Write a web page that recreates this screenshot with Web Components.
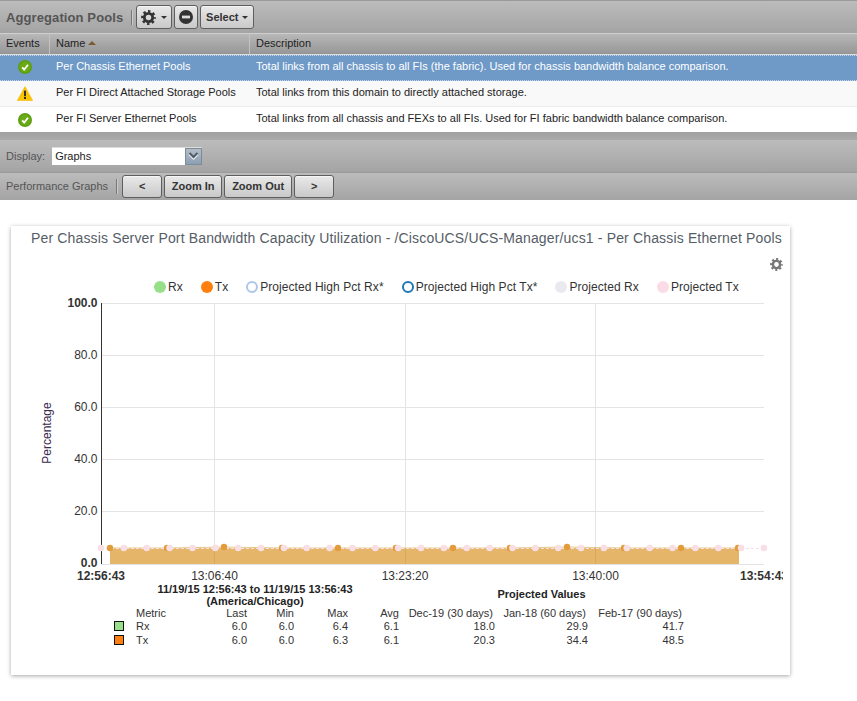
<!DOCTYPE html>
<html>
<head>
<meta charset="utf-8">
<title>Aggregation Pools</title>
<style>
  html, body { margin: 0; background: #fff; }
  body { font-family: "Liberation Sans", Arial, sans-serif; font-size: 11px; color: #222; overflow: hidden; height: 701px; }
</style>
</head>
<body>
<ucs-page>
  <ucs-bar slot="top" style="--h:33px;--pad:6px">
    <span style="font:bold 13px 'Liberation Sans',sans-serif;color:#555;letter-spacing:.1px">Aggregation Pools</span>
    <ucs-sep></ucs-sep>
    <ucs-button w="36" icon="gear-caret"></ucs-button>
    <ucs-button w="24" icon="minus"></ucs-button>
    <ucs-button w="54" bold caret>Select</ucs-button>
  </ucs-bar>
  <pool-table slot="top">
    <pool-row status="ok" selected name="Per Chassis Ethernet Pools" desc="Total links from all chassis to all FIs (the fabric). Used for chassis bandwidth balance comparison."></pool-row>
    <pool-row status="warn" alt name="Per FI Direct Attached Storage Pools" desc="Total links from this domain to directly attached storage."></pool-row>
    <pool-row status="ok" name="Per FI Server Ethernet Pools" desc="Total links from all chassis and FEXs to all FIs. Used for FI fabric bandwidth balance comparison."></pool-row>
  </pool-table>
  <display-bar slot="top"></display-bar>
  <ucs-bar slot="top" style="--h:28px;--pad:6px;padding-bottom:1px">
    <span style="color:#555">Performance Graphs</span>
    <ucs-sep style="margin-right:3px"></ucs-sep>
    <ucs-button w="40" bold h="23">&lt;</ucs-button>
    <ucs-button w="58" bold h="23">Zoom In</ucs-button>
    <ucs-button w="68" bold h="23">Zoom Out</ucs-button>
    <ucs-button w="40" bold h="23">&gt;</ucs-button>
  </ucs-bar>
  <chart-card title-text="Per Chassis Server Port Bandwidth Capacity Utilization - /CiscoUCS/UCS-Manager/ucs1 - Per Chassis Ethernet Pools">
    <chart-legend>
      <legend-item color="#98df8a">Rx</legend-item>
      <legend-item color="#ff7f0e">Tx</legend-item>
      <legend-item ring="#aec7e8">Projected High Pct Rx*</legend-item>
      <legend-item ring="#1f77b4">Projected High Pct Tx*</legend-item>
      <legend-item color="#e9e9ef">Projected Rx</legend-item>
      <legend-item color="#fbdce6">Projected Tx</legend-item>
    </chart-legend>
    <chart-plot></chart-plot>
    <stats-table></stats-table>
  </chart-card>
</ucs-page>

<script>
function gearSvg(size, color) {
  return `<svg width="${size}" height="${size}" viewBox="0 0 18 18" fill="none" stroke="${color}">
    <circle cx="9" cy="9" r="5" stroke-width="3.4"/>
    <circle cx="9" cy="9" r="7.4" stroke-width="3" stroke-dasharray="2.9 2.91" stroke-dashoffset="1.45"/>
  </svg>`;
}

class UcsPage extends HTMLElement {
  constructor() {
    super();
    this.attachShadow({ mode: "open" });
    this.shadowRoot.innerHTML = `
      <style>
        :host { display: block; }
        .top { display: flex; flex-direction: column; height: 200px; }
        .body { padding: 26px 67px 0 11px; }
      </style>
      <div class="top"><slot name="top"></slot></div>
      <div class="body"><slot></slot></div>`;
  }
}

class UcsBar extends HTMLElement {
  constructor() {
    super();
    this.attachShadow({ mode: "open" });
    this.shadowRoot.innerHTML = `
      <style>
        :host {
          display: flex;
          align-items: center;
          box-sizing: border-box;
          height: var(--h);
          padding-left: var(--pad);
          gap: 2px;
          background: linear-gradient(#bcbcbc, #a4a4a4);
          border-top: 1px solid #9a9a9a;
        }
      </style>
      <slot></slot>`;
  }
}

class UcsSep extends HTMLElement {
  constructor() {
    super();
    this.attachShadow({ mode: "open" });
    this.shadowRoot.innerHTML = `
      <style>
        :host { display: block; width: 1px; height: 15px; margin: 0 2px 0 6px; background: #777; box-shadow: 1px 0 0 #ccc; }
      </style>`;
  }
}

class UcsButton extends HTMLElement {
  constructor() {
    super();
    this.attachShadow({ mode: "open" });
  }
  connectedCallback() {
    const w = this.getAttribute("w");
    const h = this.getAttribute("h") || 24;
    const icon = this.getAttribute("icon");
    let inner = "<slot></slot>";
    if (icon === "gear-caret") {
      inner = `${gearSvg(15, "#333")}<i class="caret" style="margin-left:5px"></i>`;
    } else if (icon === "minus") {
      inner = `<svg width="14" height="14" viewBox="0 0 14 14"><circle cx="7" cy="7" r="7" fill="#333"/><rect x="3" y="5.6" width="8" height="2.8" fill="#ddd"/></svg>`;
    } else if (this.hasAttribute("caret")) {
      inner = `<slot></slot><i class="caret" style="margin-left:4px"></i>`;
    }
    this.shadowRoot.innerHTML = `
      <style>
        :host { display: inline-flex; }
        .b {
          display: flex;
          align-items: center;
          justify-content: center;
          box-sizing: border-box;
          width: ${w}px;
          height: ${h}px;
          border: 1px solid #5e5e5e;
          border-radius: 3px;
          background: linear-gradient(#e9e9e9, #c9c9c9);
          box-shadow: inset 0 1px 0 #f6f6f6;
          color: #333;
          font-size: 11px;
          font-weight: ${this.hasAttribute("bold") ? "bold" : "normal"};
        }
        .caret { border: 3px solid transparent; border-top: 3px solid #333; border-bottom: 0; display: block; width: 0; height: 0; }
      </style>
      <div class="b">${inner}</div>`;
  }
}

class StatusIcon extends HTMLElement {
  constructor() {
    super();
    this.attachShadow({ mode: "open" });
  }
  connectedCallback() {
    const art = this.getAttribute("kind") === "warn"
      ? `<svg width="16" height="15" viewBox="0 0 16 15"><path d="M8 .5 15.7 14.5H.3z" fill="#fcc400" stroke="#f0b000" stroke-width=".5"/><rect x="7" y="4.6" width="2" height="5.6" fill="#333"/><rect x="7" y="11" width="2" height="2" fill="#333"/></svg>`
      : `<svg width="14" height="14" viewBox="0 0 14 14"><circle cx="7" cy="7" r="7" fill="#5e9e12"/><circle cx="7" cy="7" r="5.4" fill="#6aaa14"/><path d="M4.2 7.3 6.2 9.6 10 4.8" fill="none" stroke="#fff" stroke-width="1.8"/></svg>`;
    this.shadowRoot.innerHTML = `<style>:host{display:flex;align-items:center;justify-content:center}</style>${art}`;
  }
}

class PoolTable extends HTMLElement {
  constructor() {
    super();
    this.attachShadow({ mode: "open" });
    this.shadowRoot.innerHTML = `
      <style>
        :host { display: block; background: #fff; }
        .head {
          display: grid;
          grid-template-columns: 50px 200px 1fr;
          height: 22px;
          box-sizing: border-box;
          background: linear-gradient(#b8b8b8, #969696);
          border-top: 1px solid #cfcfcf;
          border-bottom: 1px solid #ddd;
          color: #222;
        }
        .head div { padding-left: 6px; line-height: 18px; border-right: 1px solid #c2c2c2; }
        .head div:last-child { border: 0; }
        .sort { display: inline-block; margin-left: 3px; border: 4px solid transparent; border-bottom: 4px solid #7a5a30; border-top: 0; vertical-align: 2px; }
        .gap { height: 8px; background: linear-gradient(#a0a0a0, #aaaaaa); }
      </style>
      <div class="head"><div>Events</div><div>Name<i class="sort"></i></div><div>Description</div></div>
      <slot></slot>
      <div class="gap"></div>`;
  }
}

class PoolRow extends HTMLElement {
  constructor() {
    super();
    this.attachShadow({ mode: "open" });
  }
  connectedCallback() {
    const selected = this.hasAttribute("selected");
    const alt = this.hasAttribute("alt");
    this.shadowRoot.innerHTML = `
      <style>
        :host {
          display: grid;
          grid-template-columns: 50px 200px 1fr;
          align-items: center;
          height: ${selected || alt ? 26 : 25}px;
          box-sizing: border-box;
          color: ${selected ? "#fff" : "#222"};
          background: ${selected ? "#6f9ac7" : alt ? "#f9f9f9" : "#fff"};
          border-bottom: ${selected ? "1px dotted #c6d6e8" : alt ? "1px solid #eee" : "0"};
          ${selected ? "border-top: 1px dotted #c6d6e8;" : ""}
        }
        span { padding-left: 6px; margin-top: -4px; white-space: nowrap; }
        status-icon { margin-top: ${selected ? "-2px" : "0"}; }
      </style>
      <status-icon kind="${this.getAttribute("status")}"></status-icon>
      <span>${this.getAttribute("name")}</span>
      <span>${this.getAttribute("desc")}</span>`;
  }
}

class DisplayBar extends HTMLElement {
  constructor() {
    super();
    this.attachShadow({ mode: "open" });
    this.shadowRoot.innerHTML = `
      <style>
        :host {
          display: flex;
          align-items: center;
          box-sizing: border-box;
          height: 32px;
          padding: 0 0 1px 6px;
          gap: 7px;
          background: linear-gradient(#bcbcbc, #a4a4a4);
          color: #555;
        }
        .select { display: flex; width: 150px; height: 18px; background: #fff; border-top: 1px solid #ddd; box-sizing: border-box; color: #222; }
        .val { flex: 1; padding-left: 3px; line-height: 17px; }
        .arrow { width: 17px; display: flex; align-items: center; justify-content: center; background: linear-gradient(#b4bdc6, #8ba0b4); border: 1px solid #7f8c98; box-sizing: border-box; }
      </style>
      <span>Display:</span>
      <div class="select">
        <div class="val">Graphs</div>
        <div class="arrow"><svg width="11" height="8" viewBox="0 0 11 8"><path d="M1 2.5 5.5 7 10 2.5" fill="none" stroke="#eef0f2" stroke-width="1.4"/><path d="M1.5 1 5.5 5 9.5 1" fill="none" stroke="#4f5b66" stroke-width="2"/></svg></div>
      </div>`;
  }
}

class ChartCard extends HTMLElement {
  constructor() {
    super();
    this.attachShadow({ mode: "open" });
  }
  connectedCallback() {
    this.shadowRoot.innerHTML = `
      <style>
        :host {
          display: block;
          position: relative;
          box-sizing: border-box;
          height: 449px;
          background: #fff;
          box-shadow: 0 1px 4px rgba(0,0,0,.35);
        }
        h2 {
          margin: 0;
          padding: 4px 0 0 20px;
          height: 26px;
          box-sizing: border-box;
          font: normal 14px "Liberation Sans", sans-serif;
          letter-spacing: .153px;
          color: #555d66;
          white-space: nowrap;
        }
        .gear { position: absolute; left: 759px; top: 32px; line-height: 0; }
      </style>
      <h2>${this.getAttribute("title-text")}</h2>
      <div class="gear">${gearSvg(13, "#777")}</div>
      <slot></slot>`;
  }
}

class ChartLegend extends HTMLElement {
  constructor() {
    super();
    this.attachShadow({ mode: "open" });
    this.shadowRoot.innerHTML = `
      <style>
        :host { display: flex; gap: 18px; height: 41px; box-sizing: border-box; padding: 28px 0 0 143px; font: 12px "Liberation Sans", sans-serif; letter-spacing: .06px; color: #333; }
      </style>
      <slot></slot>`;
  }
}

class LegendItem extends HTMLElement {
  constructor() {
    super();
    this.attachShadow({ mode: "open" });
  }
  connectedCallback() {
    const ring = this.getAttribute("ring");
    const dot = ring
      ? `background:#fff;border:2px solid ${ring};width:8px;height:8px;`
      : `background:${this.getAttribute("color")};width:12px;height:12px;`;
    this.shadowRoot.innerHTML = `
      <style>
        :host { display: flex; align-items: center; gap: 2px; height: 14px; white-space: nowrap; }
        i { display: block; border-radius: 50%; ${dot} }
      </style>
      <i></i><slot></slot>`;
  }
}

class ChartPlot extends HTMLElement {
  constructor() {
    super();
    this.attachShadow({ mode: "open" });
  }
  connectedCallback() {
    let grid = "";
    [303, 355, 407, 459, 511].forEach(y => { grid += `<line x1="101" x2="764" y1="${y}.5" y2="${y}.5"/>`; });
    [214, 405, 595].forEach(x => { grid += `<line x1="${x}.5" x2="${x}.5" y1="303" y2="564"/>`; });

    let ticks = "";
    [[303, "100.0", 1], [355, "80.0"], [407, "60.0"], [459, "40.0"], [511, "20.0"], [563, "0.0", 1]].forEach(([y, t, b]) => {
      ticks += `<text x="97.5" y="${y + 4}" text-anchor="end" ${b ? 'font-weight="bold"' : ""}>${t}</text>`;
    });

    let pink = "";
    for (let i = 0; i < 30; i++) pink += `<circle cx="${101 + 22.86 * i}" cy="548" r="3.3"/>`;

    const txX = [110, 167, 224, 282, 338, 396, 453, 510, 567, 624, 681, 738];
    const txY = [548, 548, 547, 548, 548, 548, 548, 548, 547, 548, 548, 548];
    let tx = "";
    txX.forEach((x, i) => { tx += `<circle cx="${x}" cy="${txY[i]}" r="3.2"/>`; });
    const txLine = txX.map((x, i) => `${x},${txY[i]}`).join(" ");

    let over = "";
    [214, 405, 595].forEach(x => { over += `<line x1="${x}.5" x2="${x}.5" y1="548" y2="564" stroke="#b98f50" stroke-opacity=".35"/>`; });

    this.shadowRoot.innerHTML = `
      <style>
        :host { display: block; height: 290px; }
        svg { display: block; font-family: "Liberation Sans", sans-serif; font-size: 12px; fill: #333; }
        .grid line { stroke: #e4e4e4; stroke-width: 1; }
        .pink { fill: #f7dfe5; }
        .tx { fill: #e39c3c; }
      </style>
      <svg width="779" height="290" viewBox="11 293 779 290">
        <defs><clipPath id="c"><rect x="11" y="293" width="772" height="290"/></clipPath></defs>
        <g class="grid">${grid}</g>
        <rect x="110" y="548" width="629" height="16" fill="#e5b56a"/>
        ${over}
        <polyline points="${txLine}" fill="none" stroke="#e8c888" stroke-width="1"/>
        <line x1="101" x2="764" y1="548.5" y2="548.5" stroke="#f7dfe5" stroke-dasharray="3 2"/>
        <line x1="101.5" x2="101.5" y1="303" y2="564" stroke="#333"/>
        <line x1="101" x2="764" y1="564.5" y2="564.5" stroke="#e4e4e4"/>
        <g class="tx">${tx}</g>
        <g class="pink">${pink}</g>
        <g>${ticks}</g>
        <text transform="translate(51 433) rotate(-90)" text-anchor="middle" fill="#3a2a50">Percentage</text>
        <g clip-path="url(#c)">
          <text x="101" y="580" text-anchor="middle" font-weight="bold">12:56:43</text>
          <text x="214.5" y="580" text-anchor="middle">13:06:40</text>
          <text x="405" y="580" text-anchor="middle">13:23:20</text>
          <text x="595.5" y="580" text-anchor="middle">13:40:00</text>
          <text x="764" y="580" text-anchor="middle" font-weight="bold">13:54:43</text>
        </g>
      </svg>`;
  }
}

class StatsTable extends HTMLElement {
  constructor() {
    super();
    this.attachShadow({ mode: "open" });
  }
  connectedCallback() {
    const rows = [
      ["#98df8a", "Rx", "6.0", "6.0", "6.4", "6.1", "18.0", "29.9", "41.7"],
      ["#ff7f0e", "Tx", "6.0", "6.0", "6.3", "6.1", "20.3", "34.4", "48.5"]
    ];
    let body = "";
    rows.forEach(r => {
      body += `<div><i class="sw" style="background:${r[0]}"></i></div><div>${r[1]}</div>` +
        r.slice(2).map(v => `<div class="n">${v}</div>`).join("");
    });
    this.shadowRoot.innerHTML = `
      <style>
        :host { display: block; padding-left: 103px; font: 11px "Liberation Sans", sans-serif; color: #333; }
        .g { display: grid; grid-template-columns: 22px 60px 51px 47px 54px 51px 96px 93px 96px; grid-template-rows: 23px 13px 14px 14px; line-height: 14px; }
        .head { grid-column: 1 / span 6; text-align: center; font-weight: bold; line-height: 12px; color: #222; padding-right: 3px; white-space: nowrap; }
        .proj { grid-column: 7 / span 3; text-align: center; font-weight: bold; line-height: 23px; color: #222; }
        .n { text-align: right; }
        .p { padding-right: 2px; white-space: nowrap; }
        .sw { display: block; width: 8px; height: 8px; border: 1px solid #111; margin-top: 2px; }
      </style>
      <div class="g">
        <div class="head">11/19/15 12:56:43 to 11/19/15 13:56:43<br>(America/Chicago)</div>
        <div class="proj">Projected Values</div>
        <div></div><div>Metric</div>
        <div class="n">Last</div><div class="n">Min</div><div class="n">Max</div><div class="n">Avg</div>
        <div class="n p">Dec-19 (30 days)</div><div class="n p">Jan-18 (60 days)</div><div class="n p">Feb-17 (90 days)</div>
        ${body}
      </div>`;
  }
}

customElements.define("ucs-page", UcsPage);
customElements.define("ucs-bar", UcsBar);
customElements.define("ucs-sep", UcsSep);
customElements.define("ucs-button", UcsButton);
customElements.define("status-icon", StatusIcon);
customElements.define("pool-table", PoolTable);
customElements.define("pool-row", PoolRow);
customElements.define("display-bar", DisplayBar);
customElements.define("chart-card", ChartCard);
customElements.define("chart-legend", ChartLegend);
customElements.define("legend-item", LegendItem);
customElements.define("chart-plot", ChartPlot);
customElements.define("stats-table", StatsTable);
</script>
</body>
</html>
